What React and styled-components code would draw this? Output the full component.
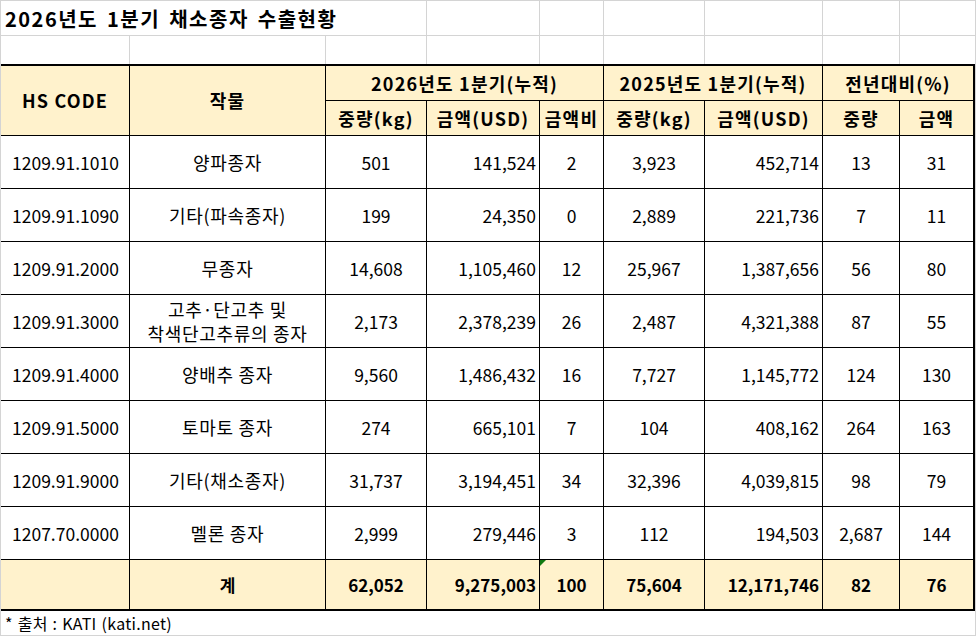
import React from "react";
import styled, { createGlobalStyle } from "styled-components";

const GlobalStyle = createGlobalStyle`
  html, body {
    margin: 0;
    padding: 0;
    background: #ffffff;
  }
  body {
    font-family: "Noto Sans CJK KR", "Noto Sans", sans-serif;
    color: #000000;
  }
`;

const COLS = "128px 195px 100px 112px 63px 100px 117px 76px";
const GRID = "#d4d4d4";
const GOLD = "#fff2cc";

const Sheet = styled.div`
  width: 976px;
  height: 636px;
  box-sizing: border-box;
  border-left: 1px solid ${GRID};
  border-right: 1px solid ${GRID};
  overflow: hidden;
`;

const BlankRows = styled.div`
  display: grid;
  grid-template-columns: ${COLS} 75px;
  grid-template-rows: 34px 28px;
  gap: 1px;
  background: ${GRID};
  border-top: 1px solid ${GRID};
`;

const Blank = styled.div`
  background: #ffffff;
  grid-column: ${(p) => p.$span || "auto"};
  display: flex;
  align-items: center;
`;

const Title = styled.h1`
  margin: 0;
  padding-left: 4px;
  font-size: 20px;
  font-weight: 700;
  white-space: nowrap;
  letter-spacing: 1.5px;
  word-spacing: 3px;
`;

const Table = styled.div`
  display: grid;
  grid-template-columns: ${COLS} 73px;
  grid-template-rows: 34px 34px repeat(8, 52px) 49px;
  gap: 1px;
  background: #000000;
  border-top: 2px solid #000000;
  border-bottom: 2px solid #000000;
  border-right: 2px solid #000000;
`;

const Cell = styled.div`
  position: relative;
  background: ${(p) => (p.$head || p.$total ? GOLD : "#ffffff")};
  grid-column: ${(p) => p.$col || "auto"};
  grid-row: ${(p) => p.$row || "auto"};
  display: flex;
  align-items: center;
  justify-content: ${(p) =>
    p.$align === "left" ? "flex-start" : p.$align === "right" ? "flex-end" : "center"};
  text-align: ${(p) => p.$align || "center"};
  padding: ${(p) => (p.$align === "left" ? "0 0 0 11px" : p.$align === "right" ? "0 3px 0 0" : "0")};
  font-size: ${(p) => (p.$head ? "18px" : p.$total ? "17px" : "17.5px")};
  font-weight: ${(p) => (p.$head || p.$total ? 700 : 400)};
  line-height: 23px;
  white-space: nowrap;
  letter-spacing: ${(p) => (p.$head ? "1.2px" : "0")};
`;

const Flagged = styled(Cell)`
  &::before {
    content: "";
    position: absolute;
    left: 0;
    top: 0;
    border-top: 6px solid #117a11;
    border-right: 6px solid transparent;
  }
`;

const CropName = styled.span`
  font-size: 18px;
  letter-spacing: 0.7px;
  line-height: 24px;
`;

const Caption = styled.div`
  height: 24px;
  border-bottom: 1px solid ${GRID};
  display: flex;
  align-items: center;
  padding-left: 4px;
  font-size: 16px;
  letter-spacing: 0.3px;
  word-spacing: 1px;
  white-space: nowrap;
`;

const rows = [
  ["1209.91.1010", "양파종자", "501", "141,524", "2", "3,923", "452,714", "13", "31"],
  ["1209.91.1090", "기타(파속종자)", "199", "24,350", "0", "2,889", "221,736", "7", "11"],
  ["1209.91.2000", "무종자", "14,608", "1,105,460", "12", "25,967", "1,387,656", "56", "80"],
  ["1209.91.3000", "고추·단고추 및\n착색단고추류의 종자", "2,173", "2,378,239", "26", "2,487", "4,321,388", "87", "55"],
  ["1209.91.4000", "양배추 종자", "9,560", "1,486,432", "16", "7,727", "1,145,772", "124", "130"],
  ["1209.91.5000", "토마토 종자", "274", "665,101", "7", "104", "408,162", "264", "163"],
  ["1209.91.9000", "기타(채소종자)", "31,737", "3,194,451", "34", "32,396", "4,039,815", "98", "79"],
  ["1207.70.0000", "멜론 종자", "2,999", "279,446", "3", "112", "194,503", "2,687", "144"],
];

const aligns = ["left", "center", "center", "right", "center", "center", "right", "center", "center"];

const Name = ({ text }) => (
  <CropName>
    {text.split("\n").map((line, i) => (
      <div key={i}>{line}</div>
    ))}
  </CropName>
);

export default function App() {
  return (
    <>
      <GlobalStyle />
      <Sheet>
        <BlankRows>
          <Blank $span="1 / 4">
            <Title>2026년도 1분기 채소종자 수출현황</Title>
          </Blank>
          {Array.from({ length: 6 }).map((_, i) => (
            <Blank key={"t" + i} />
          ))}
          {Array.from({ length: 9 }).map((_, i) => (
            <Blank key={"b" + i} />
          ))}
        </BlankRows>

        <Table>
          <Cell $head $col="1" $row="1 / 3">HS CODE</Cell>
          <Cell $head $col="2" $row="1 / 3">작물</Cell>
          <Cell $head $col="3 / 6" $row="1">2026년도 1분기(누적)</Cell>
          <Cell $head $col="6 / 8" $row="1">2025년도 1분기(누적)</Cell>
          <Cell $head $col="8 / 10" $row="1">전년대비(%)</Cell>
          <Cell $head>중량(kg)</Cell>
          <Cell $head>금액(USD)</Cell>
          <Cell $head>금액비</Cell>
          <Cell $head>중량(kg)</Cell>
          <Cell $head>금액(USD)</Cell>
          <Cell $head>중량</Cell>
          <Cell $head>금액</Cell>

          {rows.map((r) =>
            r.map((v, i) => (
              <Cell key={r[0] + i} $align={aligns[i]}>
                {i === 1 ? <Name text={v} /> : v}
              </Cell>
            ))
          )}

          <Cell $total />
          <Cell $total>계</Cell>
          <Cell $total>62,052</Cell>
          <Cell $total $align="right">9,275,003</Cell>
          <Flagged $total>100</Flagged>
          <Cell $total>75,604</Cell>
          <Cell $total $align="right">12,171,746</Cell>
          <Cell $total>82</Cell>
          <Cell $total>76</Cell>
        </Table>

        <Caption>* 출처 : KATI (kati.net)</Caption>
      </Sheet>
    </>
  );
}
